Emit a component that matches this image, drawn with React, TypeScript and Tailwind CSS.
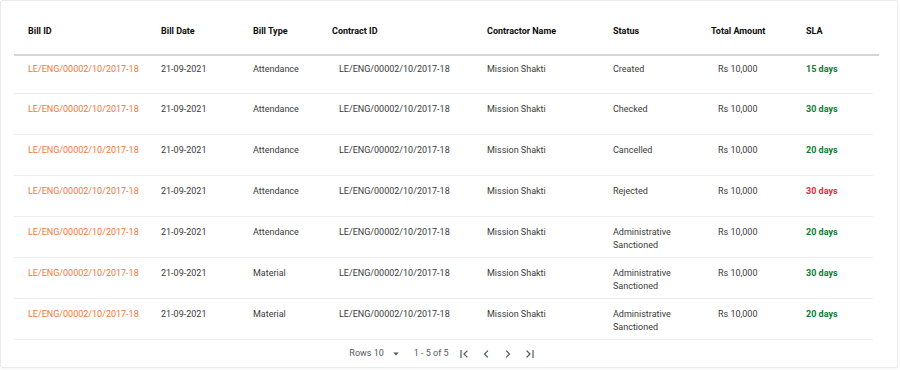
import React from 'react';

const cols = 'grid grid-cols-[133px_92px_79px_155px_126px_98px_95px_81px]';

const rows = [
  { type: 'Attendance', status: 'Created', sla: '15 days', late: false },
  { type: 'Attendance', status: 'Checked', sla: '30 days', late: false },
  { type: 'Attendance', status: 'Cancelled', sla: '20 days', late: false },
  { type: 'Attendance', status: 'Rejected', sla: '30 days', late: true },
  { type: 'Attendance', status: 'Administrative Sanctioned', sla: '20 days', late: false },
  { type: 'Material', status: 'Administrative Sanctioned', sla: '30 days', late: false },
  { type: 'Material', status: 'Administrative Sanctioned', sla: '20 days', late: false },
];

const headers = ['Bill ID', 'Bill Date', 'Bill Type', 'Contract ID', 'Contractor Name', 'Status', 'Total Amount', 'SLA'];

const Icon = ({ d }: { d: string }) => (
  <button className="w-[16px] h-[16px] flex items-center justify-center text-[#505a5f]">
    <svg width="12" height="12" viewBox="0 0 24 24" fill="none" stroke="currentColor" strokeWidth="2.4" strokeLinecap="square">
      <path d={d} />
    </svg>
  </button>
);

const App = () => {
  return (
    <div className="w-[900px] h-[370px] bg-white font-['Roboto',sans-serif]">
      <div className="w-[898px] h-[368px] border border-[#ebebeb] rounded-[2px] bg-white pl-[13px] shadow-[0_1px_2px_rgba(0,0,0,0.04)]">
        <div className={`${cols} w-[865px] h-[55px] border-b-2 border-[#d6d5d4] pt-[24px] text-[9px] leading-[13px] font-bold text-[#0b0c0c]`}>
          {headers.map((h) => (
            <div key={h} className="pl-[14px]">{h}</div>
          ))}
        </div>
        {rows.map((r, i) => (
          <div
            key={i}
            className={`${cols} w-[859px] border-b border-[#eeeeee] text-[9px] leading-[13px] text-[#3a3a3a] ${i === 0 ? 'h-[38px] pt-[7px]' : 'h-[41px] pt-[9px]'}`}
          >
            <div className="pl-[14px] text-[#f47738]">LE/ENG/00002/10/2017-18</div>
            <div className="pl-[14px]">21-09-2021</div>
            <div className="pl-[14px]">{r.type}</div>
            <div className="pl-[21px]">LE/ENG/00002/10/2017-18</div>
            <div className="pl-[14px]">Mission Shakti</div>
            <div className="pl-[14px] pr-[20px]">{r.status}</div>
            <div className="pl-[21px]">Rs 10,000</div>
            <div className={`pl-[14px] font-bold ${r.late ? 'text-[#e8283f]' : 'text-[#0a7d34]'}`}>{r.sla}</div>
          </div>
        ))}
        <div className="w-[859px] h-[27px] flex items-center justify-center text-[9px] text-[#505a5f]">
          <span>Rows 10</span>
          <svg className="ml-[8px]" width="8" height="8" viewBox="0 0 10 10" fill="currentColor">
            <path d="M1.5 3h7L5 7z" />
          </svg>
          <span className="ml-[14px]">1 - 5 of 5</span>
          <div className="ml-[7px] flex items-center gap-[6px]">
            <Icon d="M6 5v14M18 6l-6 6 6 6" />
            <Icon d="M15 6l-6 6 6 6" />
            <Icon d="M9 6l6 6-6 6" />
            <Icon d="M6 6l6 6-6 6M18 5v14" />
          </div>
        </div>
      </div>
    </div>
  );
};

export default App;
